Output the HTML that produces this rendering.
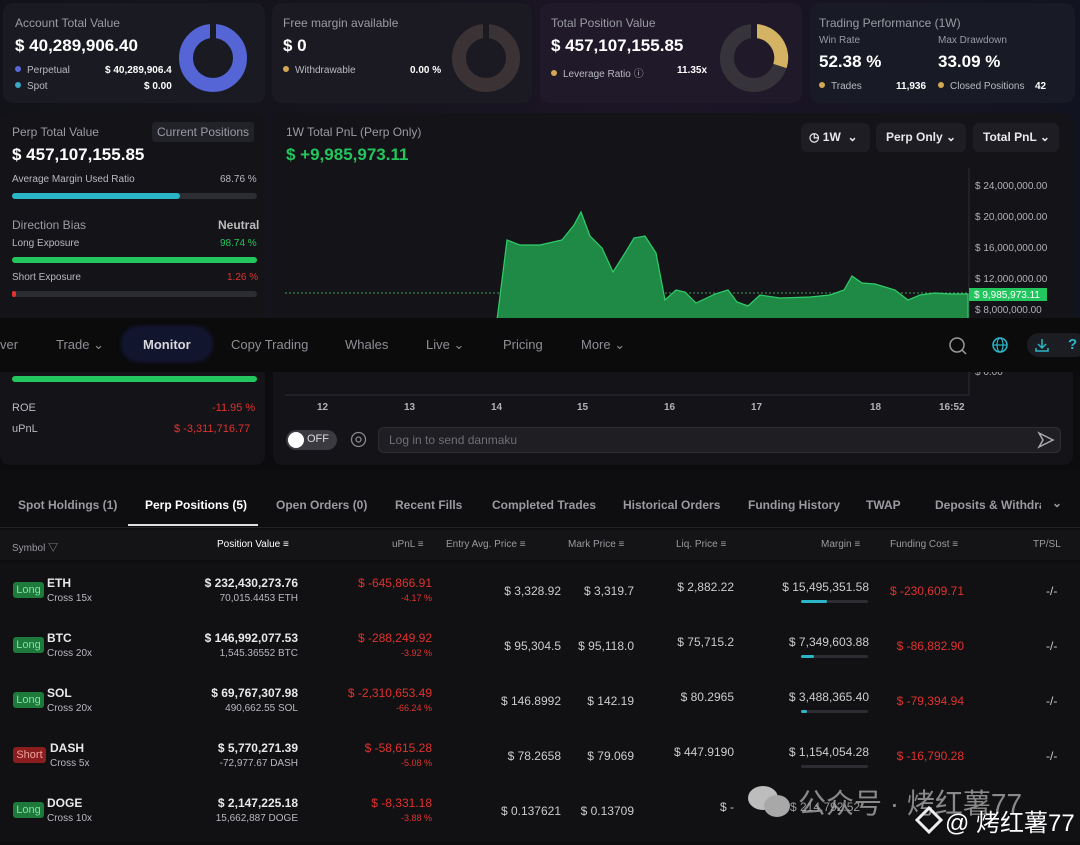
<!DOCTYPE html>
<html><head><meta charset="utf-8"><style>
*{margin:0;padding:0;box-sizing:border-box}
body{width:1080px;height:845px;overflow:hidden;background:#0c0c0e;font-family:"Liberation Sans","Noto Sans CJK SC",sans-serif;color:#e8e8ea;position:relative}
.a{position:absolute;white-space:nowrap}
.card{position:absolute;background:#15161b;border-radius:10px}
.lbl{color:#9a9ba3;font-size:12px}
.big{font-weight:bold;font-size:17px;color:#fff}
.sm{font-size:10px;color:#b8b9c0}
.dot{display:inline-block;width:6px;height:6px;border-radius:3px;margin-right:6px;vertical-align:1px}
.bar{position:absolute;height:6px;border-radius:3px;background:#2c2d33}
.nav{color:#8e8f96;font-size:13px}
.tab{color:#9a9ba0;font-size:12px;font-weight:bold}
.th{color:#9a9ba0;font-size:10px}
.r{text-align:right}
.red{color:#e0322f}
.grn{color:#22c55e}
.badge{position:absolute;font-size:11px;padding:2px 2px;border-radius:3px;width:31px;text-align:center}
</style></head><body>
<div class="a" style="left:0;top:0;width:1080px;height:320px;background:linear-gradient(90deg,#121318 0%,#17141f 40%,#1c1527 60%,#121320 100%)"></div>

<div class="card" style="left:3px;top:3px;width:262px;height:100px;background:#1a1b22"></div>
<div class="a lbl" style="left:15px;top:16px">Account Total Value</div>
<div class="a big" style="left:15px;top:36px">$ 40,289,906.40</div>
<div class="a sm" style="left:15px;top:65px"><span class="dot" style="background:#5a67d8"></span>Perpetual</div>
<div class="a sm" style="left:105px;top:65px;color:#fff;font-weight:bold">$ 40,289,906.4</div>
<div class="a sm" style="left:15px;top:81px"><span class="dot" style="background:#3aa6c8"></span>Spot</div>
<div class="a sm" style="left:144px;top:81px;color:#fff;font-weight:bold">$ 0.00</div>
<svg class="a" style="left:177px;top:22px" width="72" height="72"><circle cx="36" cy="36" r="27" fill="none" stroke="#5565d6" stroke-width="14"/><rect x="33" y="0" width="6" height="18" fill="#1a1b22"/></svg>

<div class="card" style="left:272px;top:3px;width:260px;height:100px;background:#1b1a22"></div>
<div class="a lbl" style="left:283px;top:16px">Free margin available</div>
<div class="a big" style="left:283px;top:36px">$ 0</div>
<div class="a sm" style="left:283px;top:65px"><span class="dot" style="background:#d4a853"></span>Withdrawable</div>
<div class="a sm" style="left:410px;top:65px;color:#fff;font-weight:bold">0.00 %</div>
<svg class="a" style="left:450px;top:22px" width="72" height="72"><circle cx="36" cy="36" r="27" fill="none" stroke="#3a3234" stroke-width="14"/><rect x="33" y="0" width="6" height="18" fill="#1b1a22"/></svg>

<div class="card" style="left:540px;top:3px;width:262px;height:100px;background:#1f1929"></div>
<div class="a lbl" style="left:551px;top:16px">Total Position Value</div>
<div class="a big" style="left:551px;top:36px">$ 457,107,155.85</div>
<div class="a sm" style="left:551px;top:65px"><span class="dot" style="background:#d4a853"></span>Leverage Ratio ⓘ</div>
<div class="a sm" style="left:677px;top:65px;color:#fff;font-weight:bold">11.35x</div>
<svg class="a" style="left:718px;top:22px" width="72" height="72"><circle cx="36" cy="36" r="27" fill="none" stroke="#36343a" stroke-width="14"/><path d="M38 9 A27 27 0 0 1 62 44" fill="none" stroke="#d4b363" stroke-width="14"/><rect x="33" y="0" width="6" height="18" fill="#1f1929"/></svg>

<div class="card" style="left:810px;top:3px;width:265px;height:100px;background:#181a26"></div>
<div class="a lbl" style="left:819px;top:16px">Trading Performance (1W)</div>
<div class="a sm" style="left:819px;top:35px;color:#9a9ba3">Win Rate</div>
<div class="a sm" style="left:938px;top:35px;color:#9a9ba3">Max Drawdown</div>
<div class="a big" style="left:819px;top:52px">52.38 %</div>
<div class="a big" style="left:938px;top:52px">33.09 %</div>
<div class="a sm" style="left:819px;top:81px"><span class="dot" style="background:#d4a853"></span>Trades</div>
<div class="a sm" style="left:896px;top:81px;color:#fff;font-weight:bold">11,936</div>
<div class="a sm" style="left:938px;top:81px"><span class="dot" style="background:#d4a853"></span>Closed Positions</div>
<div class="a sm" style="left:1035px;top:81px;color:#fff;font-weight:bold">42</div>

<div class="card" style="left:0;top:113px;width:265px;height:352px;background:#141418"></div>
<div class="a lbl" style="left:12px;top:125px">Perp Total Value</div>
<div class="a lbl" style="left:152px;top:122px;background:#222328;padding:3px 5px;border-radius:4px">Current Positions</div>
<div class="a big" style="left:12px;top:145px">$ 457,107,155.85</div>
<div class="a sm" style="left:12px;top:174px">Average Margin Used Ratio</div>
<div class="a sm" style="left:220px;top:174px">68.76 %</div>
<div class="bar" style="left:12px;top:193px;width:245px"></div><div class="bar" style="left:12px;top:193px;width:168px;background:#2bb6c8"></div>
<div class="a lbl" style="left:12px;top:218px">Direction Bias</div>
<div class="a lbl" style="left:218px;top:218px;font-weight:bold;color:#bbb">Neutral</div>
<div class="a sm" style="left:12px;top:238px">Long Exposure</div>
<div class="a sm grn" style="left:220px;top:238px">98.74 %</div>
<div class="bar" style="left:12px;top:257px;width:245px;background:#22c55e"></div>
<div class="a sm" style="left:12px;top:272px">Short Exposure</div>
<div class="a sm red" style="left:227px;top:272px">1.26 %</div>
<div class="bar" style="left:12px;top:291px;width:245px"></div><div class="bar" style="left:12px;top:291px;width:4px;background:#e0322f"></div>
<div class="bar" style="left:12px;top:376px;width:245px;background:#22c55e"></div>
<div class="a sm" style="left:12px;top:402px;font-size:11px">ROE</div>
<div class="a sm red" style="left:212px;top:402px;font-size:11px">-11.95 %</div>
<div class="a sm" style="left:12px;top:423px;font-size:11px">uPnL</div>
<div class="a sm red" style="left:174px;top:423px;font-size:11px">$ -3,311,716.77</div>

<div class="card" style="left:273px;top:113px;width:800px;height:352px;background:#141318"></div>
<div class="a lbl" style="left:286px;top:125px">1W Total PnL (Perp Only)</div>
<div class="a big grn" style="left:286px;top:145px">$ +9,985,973.11</div>
<div class="a" style="left:801px;top:123px;width:69px;height:29px;background:#1d1d23;border-radius:6px;font-size:12px;font-weight:bold;padding:7px 8px">◷ 1W &nbsp;⌄</div>
<div class="a" style="left:876px;top:123px;width:90px;height:29px;background:#1d1d23;border-radius:6px;font-size:12px;font-weight:bold;padding:7px 10px">Perp Only ⌄</div>
<div class="a" style="left:973px;top:123px;width:86px;height:29px;background:#1d1d23;border-radius:6px;font-size:12px;font-weight:bold;padding:7px 10px">Total PnL ⌄</div>
<svg class="a" style="left:273px;top:160px" width="800" height="250">
<line x1="696" y1="8" x2="696" y2="235" stroke="#2e2e34"/>
<line x1="12" y1="235" x2="696" y2="235" stroke="#2e2e34"/>
<line x1="12" y1="133" x2="696" y2="133" stroke="#3a9d5a" stroke-dasharray="2 2"/>
<polygon fill="#1e8a45" stroke="#2fcf6a" stroke-width="1.2" points="224,160 234,80 247,85 267,85 289,80 301,65 308,52 317,76 329,88 340,112 352,93 361,78 372,76 383,93 392,140 403,130 412,132 423,143 442,134 455,130 464,142 475,146 487,135 507,138 537,137 557,135 571,130 579,116 589,123 602,124 622,130 635,140 647,135 662,133 677,134 695,134 695,160"/>
<g font-size="10" fill="#b0b0b6"><text x="702" y="29">$ 24,000,000.00</text><text x="702" y="60">$ 20,000,000.00</text><text x="702" y="91">$ 16,000,000.00</text><text x="702" y="122">$ 12,000,000.00</text><text x="702" y="153">$ 8,000,000.00</text>
<text x="702" y="215">$ 0.00</text></g>
<rect x="696" y="128" width="78" height="13" fill="#22c55e"/><text x="701" y="138" font-size="10" fill="#fff">$ 9,985,973.11</text>
<g font-size="10" fill="#b0b0b6" font-weight="bold"><text x="44" y="250">12</text><text x="131" y="250">13</text><text x="218" y="250">14</text><text x="304" y="250">15</text><text x="391" y="250">16</text><text x="478" y="250">17</text><text x="597" y="250">18</text><text x="666" y="250">16:52</text></g>
</svg>
<div class="a" style="left:286px;top:430px;width:51px;height:20px;background:#3a3a40;border-radius:10px"></div>
<div class="a" style="left:288px;top:432px;width:16px;height:16px;background:#fff;border-radius:8px"></div>
<div class="a" style="left:307px;top:433px;font-size:11px;color:#ddd">OFF</div>
<svg class="a" style="left:350px;top:431px" width="17" height="17"><circle cx="8.5" cy="8.5" r="7" fill="none" stroke="#888" stroke-width="1.3"/><circle cx="8.5" cy="8.5" r="2.5" fill="none" stroke="#888" stroke-width="1.3"/></svg>
<div class="a" style="left:378px;top:427px;width:683px;height:26px;background:#1e1e23;border:1px solid #2d2d33;border-radius:6px;font-size:12px;color:#6e6f76;padding:5px 10px">Log in to send danmaku</div>
<svg class="a" style="left:1037px;top:431px" width="18" height="18"><path d="M2 2 L16 9 L2 16 L6 9 Z" fill="none" stroke="#aaa" stroke-width="1.5"/></svg>

<div class="a" style="left:0;top:318px;width:1080px;height:54px;background:#0b0b0c"></div>
<div class="a nav" style="left:0;top:337px">ver</div>
<div class="a nav" style="left:56px;top:337px">Trade ⌄</div>
<div class="a" style="left:123px;top:328px;width:88px;height:32px;border-radius:16px;background:#12152e;box-shadow:0 0 6px #1e2260"></div>
<div class="a nav" style="left:143px;top:337px;color:#d8d8dc;font-weight:bold">Monitor</div>
<div class="a nav" style="left:231px;top:337px">Copy Trading</div>
<div class="a nav" style="left:345px;top:337px">Whales</div>
<div class="a nav" style="left:426px;top:337px">Live ⌄</div>
<div class="a nav" style="left:503px;top:337px">Pricing</div>
<div class="a nav" style="left:581px;top:337px">More ⌄</div>
<svg class="a" style="left:948px;top:336px" width="20" height="20"><circle cx="9" cy="9" r="7" fill="none" stroke="#999" stroke-width="1.5"/><line x1="14" y1="14" x2="18" y2="18" stroke="#999" stroke-width="1.5"/></svg>
<svg class="a" style="left:991px;top:336px" width="18" height="18"><circle cx="9" cy="9" r="7" fill="none" stroke="#2bb6c8" stroke-width="1.5"/><ellipse cx="9" cy="9" rx="3" ry="7" fill="none" stroke="#2bb6c8" stroke-width="1.2"/><line x1="2" y1="9" x2="16" y2="9" stroke="#2bb6c8" stroke-width="1.2"/></svg>
<div class="a" style="left:1027px;top:333px;width:60px;height:24px;background:#1c1d22;border-radius:12px"></div>
<svg class="a" style="left:1034px;top:337px" width="16" height="16"><path d="M8 2 V10 M4 7 L8 11 L12 7 M2 11 V14 H14 V11" fill="none" stroke="#2bb6c8" stroke-width="1.5"/></svg>
<div class="a" style="left:1068px;top:336px;color:#2bb6c8;font-weight:bold;font-size:15px">?</div>

<div class="a" style="left:0;top:470px;width:1080px;height:375px;background:#0e0e10"></div>
<div class="a tab" style="left:18px;top:498px">Spot Holdings (1)</div>
<div class="a tab" style="left:145px;top:498px;color:#fff">Perp Positions (5)</div>
<div class="a" style="left:128px;top:524px;width:130px;height:2px;background:#ddd"></div>
<div class="a tab" style="left:276px;top:498px">Open Orders (0)</div>
<div class="a tab" style="left:395px;top:498px">Recent Fills</div>
<div class="a tab" style="left:492px;top:498px">Completed Trades</div>
<div class="a tab" style="left:623px;top:498px">Historical Orders</div>
<div class="a tab" style="left:748px;top:498px">Funding History</div>
<div class="a tab" style="left:866px;top:498px">TWAP</div>
<div class="a tab" style="left:935px;top:498px;width:106px;overflow:hidden">Deposits &amp; Withdrawals</div>
<div class="a tab" style="left:1052px;top:496px">⌄</div>
<div class="a" style="left:0;top:527px;width:1080px;height:1px;background:#222"></div>
<div class="a" style="left:0;top:530px;width:1080px;height:30px;background:#141416"></div>
<div class="a th" style="left:12px;top:539px">Symbol ▽</div>
<div class="a th" style="left:217px;top:539px;color:#fff">Position Value ≡</div>
<div class="a th" style="left:392px;top:539px">uPnL ≡</div>
<div class="a th" style="left:446px;top:539px">Entry Avg. Price ≡</div>
<div class="a th" style="left:568px;top:539px">Mark Price ≡</div>
<div class="a th" style="left:676px;top:539px">Liq. Price ≡</div>
<div class="a th" style="left:821px;top:539px">Margin ≡</div>
<div class="a th" style="left:890px;top:539px">Funding Cost ≡</div>
<div class="a th" style="left:1033px;top:539px">TP/SL</div>
<div class="a" style="left:0;top:563px;width:1080px;height:278px;background:#111113"></div>

<div class="badge" style="left:13px;top:582px;background:#1d7a3a;color:#7ee2a0">Long</div>
<div class="a" style="left:47px;top:576px;font-size:12px;font-weight:bold">ETH</div><div class="a sm" style="left:47px;top:593px">Cross 15x</div>
<div class="a r" style="left:150px;top:576px;width:148px;font-size:12px;font-weight:bold">$ 232,430,273.76</div><div class="a r sm" style="left:150px;top:593px;width:148px">70,015.4453 ETH</div>
<div class="a r red" style="left:300px;top:576px;width:132px;font-size:12px">$ -645,866.91</div><div class="a r red" style="left:300px;top:593px;width:132px;font-size:9px">-4.17 %</div>
<div class="a r" style="left:440px;top:584px;width:121px;font-size:12px;color:#ccc">$ 3,328.92</div>
<div class="a r" style="left:560px;top:584px;width:74px;font-size:12px;color:#ccc">$ 3,319.7</div>
<div class="a r" style="left:660px;top:580px;width:74px;font-size:12px;color:#ccc">$ 2,882.22</div>
<div class="a r" style="left:740px;top:580px;width:129px;font-size:12px;color:#ccc">$ 15,495,351.58</div>
<div class="bar" style="left:801px;top:600px;width:67px;height:3px"></div><div class="bar" style="left:801px;top:600px;width:26px;height:3px;background:#2bb6c8"></div>
<div class="a r red" style="left:870px;top:584px;width:94px;font-size:12px">$ -230,609.71</div>
<div class="a" style="left:1046px;top:584px;font-size:12px;color:#ccc">-/-</div>

<div class="badge" style="left:13px;top:637px;background:#1d7a3a;color:#7ee2a0">Long</div>
<div class="a" style="left:47px;top:631px;font-size:12px;font-weight:bold">BTC</div><div class="a sm" style="left:47px;top:648px">Cross 20x</div>
<div class="a r" style="left:150px;top:631px;width:148px;font-size:12px;font-weight:bold">$ 146,992,077.53</div><div class="a r sm" style="left:150px;top:648px;width:148px">1,545.36552 BTC</div>
<div class="a r red" style="left:300px;top:631px;width:132px;font-size:12px">$ -288,249.92</div><div class="a r red" style="left:300px;top:648px;width:132px;font-size:9px">-3.92 %</div>
<div class="a r" style="left:440px;top:639px;width:121px;font-size:12px;color:#ccc">$ 95,304.5</div>
<div class="a r" style="left:560px;top:639px;width:74px;font-size:12px;color:#ccc">$ 95,118.0</div>
<div class="a r" style="left:660px;top:635px;width:74px;font-size:12px;color:#ccc">$ 75,715.2</div>
<div class="a r" style="left:740px;top:635px;width:129px;font-size:12px;color:#ccc">$ 7,349,603.88</div>
<div class="bar" style="left:801px;top:655px;width:67px;height:3px"></div><div class="bar" style="left:801px;top:655px;width:13px;height:3px;background:#2bb6c8"></div>
<div class="a r red" style="left:870px;top:639px;width:94px;font-size:12px">$ -86,882.90</div>
<div class="a" style="left:1046px;top:639px;font-size:12px;color:#ccc">-/-</div>

<div class="badge" style="left:13px;top:692px;background:#1d7a3a;color:#7ee2a0">Long</div>
<div class="a" style="left:47px;top:686px;font-size:12px;font-weight:bold">SOL</div><div class="a sm" style="left:47px;top:703px">Cross 20x</div>
<div class="a r" style="left:150px;top:686px;width:148px;font-size:12px;font-weight:bold">$ 69,767,307.98</div><div class="a r sm" style="left:150px;top:703px;width:148px">490,662.55 SOL</div>
<div class="a r red" style="left:300px;top:686px;width:132px;font-size:12px">$ -2,310,653.49</div><div class="a r red" style="left:300px;top:703px;width:132px;font-size:9px">-66.24 %</div>
<div class="a r" style="left:440px;top:694px;width:121px;font-size:12px;color:#ccc">$ 146.8992</div>
<div class="a r" style="left:560px;top:694px;width:74px;font-size:12px;color:#ccc">$ 142.19</div>
<div class="a r" style="left:660px;top:690px;width:74px;font-size:12px;color:#ccc">$ 80.2965</div>
<div class="a r" style="left:740px;top:690px;width:129px;font-size:12px;color:#ccc">$ 3,488,365.40</div>
<div class="bar" style="left:801px;top:710px;width:67px;height:3px"></div><div class="bar" style="left:801px;top:710px;width:6px;height:3px;background:#2bb6c8"></div>
<div class="a r red" style="left:870px;top:694px;width:94px;font-size:12px">$ -79,394.94</div>
<div class="a" style="left:1046px;top:694px;font-size:12px;color:#ccc">-/-</div>

<div class="badge" style="left:13px;top:747px;width:33px;background:#8a1d1d;color:#f0a0a0">Short</div>
<div class="a" style="left:50px;top:741px;font-size:12px;font-weight:bold">DASH</div><div class="a sm" style="left:50px;top:758px">Cross 5x</div>
<div class="a r" style="left:150px;top:741px;width:148px;font-size:12px;font-weight:bold">$ 5,770,271.39</div><div class="a r sm" style="left:150px;top:758px;width:148px">-72,977.67 DASH</div>
<div class="a r red" style="left:300px;top:741px;width:132px;font-size:12px">$ -58,615.28</div><div class="a r red" style="left:300px;top:758px;width:132px;font-size:9px">-5.08 %</div>
<div class="a r" style="left:440px;top:749px;width:121px;font-size:12px;color:#ccc">$ 78.2658</div>
<div class="a r" style="left:560px;top:749px;width:74px;font-size:12px;color:#ccc">$ 79.069</div>
<div class="a r" style="left:660px;top:745px;width:74px;font-size:12px;color:#ccc">$ 447.9190</div>
<div class="a r" style="left:740px;top:745px;width:129px;font-size:12px;color:#ccc">$ 1,154,054.28</div>
<div class="bar" style="left:801px;top:765px;width:67px;height:3px"></div>
<div class="a r red" style="left:870px;top:749px;width:94px;font-size:12px">$ -16,790.28</div>
<div class="a" style="left:1046px;top:749px;font-size:12px;color:#ccc">-/-</div>

<div class="badge" style="left:13px;top:802px;background:#1d7a3a;color:#7ee2a0">Long</div>
<div class="a" style="left:47px;top:796px;font-size:12px;font-weight:bold">DOGE</div><div class="a sm" style="left:47px;top:813px">Cross 10x</div>
<div class="a r" style="left:150px;top:796px;width:148px;font-size:12px;font-weight:bold">$ 2,147,225.18</div><div class="a r sm" style="left:150px;top:813px;width:148px">15,662,887 DOGE</div>
<div class="a r red" style="left:300px;top:796px;width:132px;font-size:12px">$ -8,331.18</div><div class="a r red" style="left:300px;top:813px;width:132px;font-size:9px">-3.88 %</div>
<div class="a r" style="left:440px;top:804px;width:121px;font-size:12px;color:#ccc">$ 0.137621</div>
<div class="a r" style="left:560px;top:804px;width:74px;font-size:12px;color:#ccc">$ 0.13709</div>
<div class="a" style="left:720px;top:800px;font-size:12px;color:#ccc">$ -</div>
<div class="a" style="left:790px;top:800px;font-size:12px;color:#999">$ 214,792.52</div>

<svg class="a" style="left:745px;top:782px" width="50" height="38"><ellipse cx="18" cy="16" rx="15" ry="12" fill="#bdbdbd"/><ellipse cx="32" cy="24" rx="13" ry="11" fill="#a8a8a8"/></svg>
<div class="a" style="left:798px;top:782px;font-size:28px;color:#a8a8a8;opacity:.8">公众号 · 烤红薯77</div>
<svg class="a" style="left:915px;top:806px" width="28" height="28"><path d="M14 2 L26 14 L14 26 L2 14 Z" fill="none" stroke="#eee" stroke-width="3"/></svg>
<div class="a" style="left:945px;top:803px;font-size:24px;color:#fff">@ 烤红薯77</div>
</body></html>
